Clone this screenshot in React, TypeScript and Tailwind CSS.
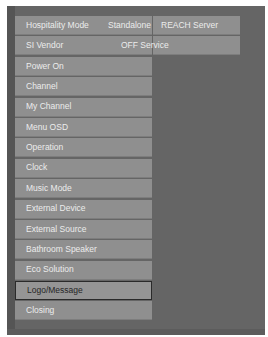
import React from 'react';

const items = [
  'Hospitality Mode',
  'SI Vendor',
  'Power On',
  'Channel',
  'My Channel',
  'Menu OSD',
  'Operation',
  'Clock',
  'Music Mode',
  'External Device',
  'External Source',
  'Bathroom Speaker',
  'Eco Solution',
  'Logo/Message',
  'Closing',
];

// the values shown next to the first two rows
const values: Record<string, { text: string; indent: string }> = {
  'Hospitality Mode': { text: 'Standalone', indent: 'ml-[0px]' },
  'SI Vendor': { text: 'OFF Service', indent: 'ml-[13px]' },
};

const subMenu = ['REACH Server', ''];

export default function App() {
  const selected = 'Logo/Message';

  return (
    <div
      className="w-[268px] h-[337px] bg-white pt-[6px] pl-[7px] pr-[3px] pb-[2px]"
      style={{ fontFamily: '"Liberation Sans", Arial, sans-serif' }}
    >
      <div className="h-full flex bg-[#656565] border-b-[6px] border-[#5c5c5c]">
        {/* darker left edge */}
        <div className="w-[8px] bg-[#555555]" />

        <div className="flex pt-[10px]">
          {/* main menu */}
          <div className="w-[137px] flex flex-col gap-[1.4px]">
            {items.map((label) => {
              const value = values[label];
              const isSelected = label === selected;
              return (
                <div
                  key={label}
                  className={`h-[19px] flex items-center pl-[11px] text-[8.5px] leading-none whitespace-nowrap ${
                    isSelected
                      ? 'bg-[#959595] border border-[#2a2a2a] pl-[10px] text-[#262626]'
                      : 'bg-[#8f8f8f] border-b border-[#7d7d7d] text-[#ececec]'
                  }`}
                >
                  <span className="w-[82px] shrink-0">{label}</span>
                  {value && (
                    <span className={`relative z-10 shrink-0 ${value.indent}`}>{value.text}</span>
                  )}
                </div>
              );
            })}
          </div>

          {/* sub menu for the highlighted option */}
          <div className="w-[87px] ml-[1px] flex flex-col gap-[1.4px]">
            {subMenu.map((label, i) => (
              <div
                key={i}
                className="h-[19px] flex items-center pl-[8px] bg-[#8f8f8f] border-b border-[#7d7d7d] text-[8.5px] leading-none text-[#ececec] whitespace-nowrap"
              >
                {label}
              </div>
            ))}
          </div>
        </div>
      </div>
    </div>
  );
}
